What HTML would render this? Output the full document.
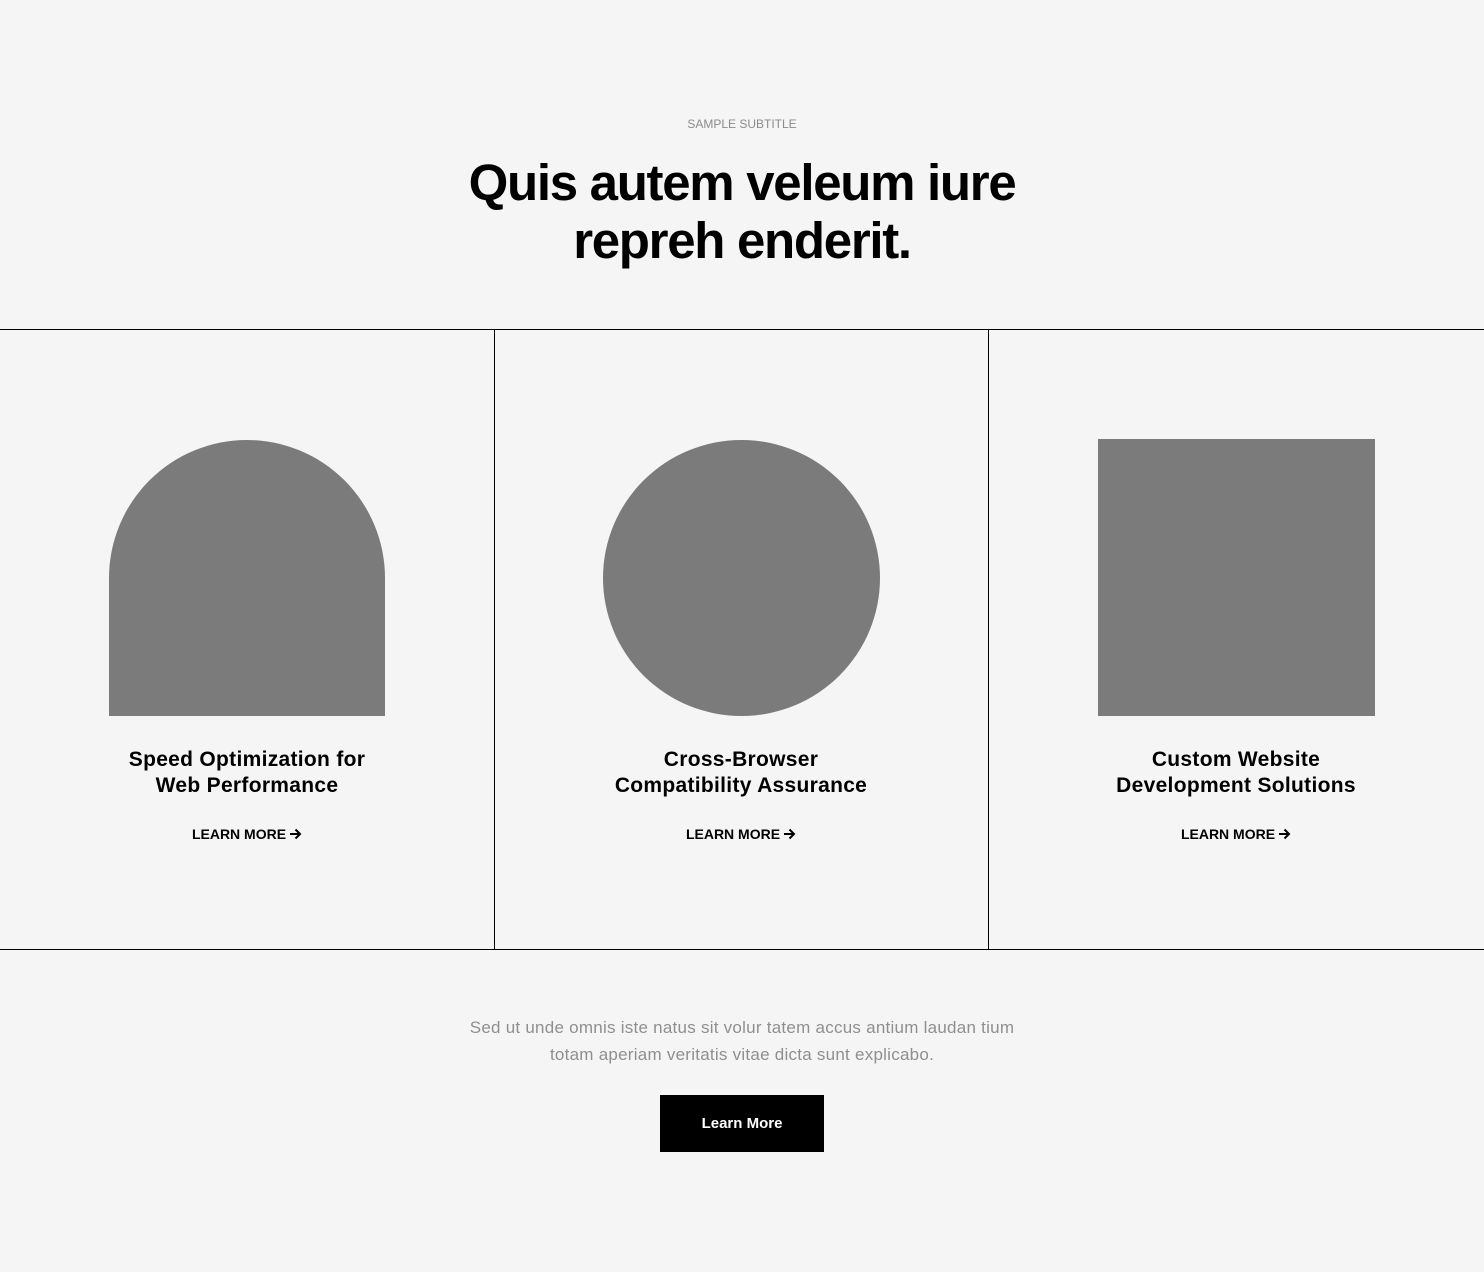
<!DOCTYPE html>
<html><head><style>
*{margin:0;padding:0;box-sizing:border-box}
body{width:1484px;height:1272px;background:#f5f5f5;font-family:"Liberation Sans",sans-serif;position:relative;overflow:hidden}
.a{position:absolute}
.sub{top:117px;left:0;width:1484px;text-align:center;font-size:12px;color:#8a8a8a}
h1{position:absolute;top:154px;left:0;width:1484px;text-align:center;font-size:51px;line-height:58px;font-weight:bold;letter-spacing:-1.3px;color:#000}
.hl{left:0;width:1484px;height:1px;background:#000}
.vl{top:329px;width:1px;height:621px;background:#000}
.sh{background:#7b7b7c}
.t{width:494px;text-align:center;font-size:21px;font-weight:bold;line-height:26px;color:#000;top:747px;letter-spacing:0.3px}
.lm{width:494px;text-align:center;font-size:14px;font-weight:bold;top:826px;color:#000}
.lm svg{vertical-align:-1px;margin-left:3px}
</style></head><body>
<div class="a sub">SAMPLE SUBTITLE</div>
<h1>Quis autem veleum iure<br>repreh enderit.</h1>
<div class="a hl" style="top:329px"></div>
<div class="a hl" style="top:949px"></div>
<div class="a vl" style="left:494px"></div>
<div class="a vl" style="left:988px"></div>
<div class="a sh" style="left:109px;top:440px;width:276px;height:276px;border-radius:138px 138px 0 0"></div>
<div class="a sh" style="left:603px;top:440px;width:277px;height:276px;border-radius:50%"></div>
<div class="a sh" style="left:1098px;top:439px;width:277px;height:277px"></div>
<div class="a t" style="left:0">Speed Optimization for<br>Web Performance</div>
<div class="a t" style="left:494px">Cross-Browser<br>Compatibility Assurance</div>
<div class="a t" style="left:989px">Custom Website<br>Development Solutions</div>
<div class="a lm" style="left:0">LEARN MORE<svg width="13" height="12" viewBox="0 0 13 12"><path d="M1 6H11M6.5 1.5L11 6 6.5 10.5" fill="none" stroke="#000" stroke-width="2"/></svg></div>
<div class="a lm" style="left:494px">LEARN MORE<svg width="13" height="12" viewBox="0 0 13 12"><path d="M1 6H11M6.5 1.5L11 6 6.5 10.5" fill="none" stroke="#000" stroke-width="2"/></svg></div>
<div class="a lm" style="left:989px">LEARN MORE<svg width="13" height="12" viewBox="0 0 13 12"><path d="M1 6H11M6.5 1.5L11 6 6.5 10.5" fill="none" stroke="#000" stroke-width="2"/></svg></div>
<div class="a" style="top:1014px;left:0;width:1484px;text-align:center;font-size:17px;letter-spacing:0.25px;line-height:27px;color:#8f8f8f">Sed ut unde omnis iste natus sit volur tatem accus antium laudan tium<br>totam aperiam veritatis vitae dicta sunt explicabo.</div>
<div class="a" style="left:660px;top:1095px;width:164px;height:57px;background:#000;color:#fff;font-size:15px;font-weight:bold;text-align:center;line-height:57px">Learn More</div>
</body></html>
